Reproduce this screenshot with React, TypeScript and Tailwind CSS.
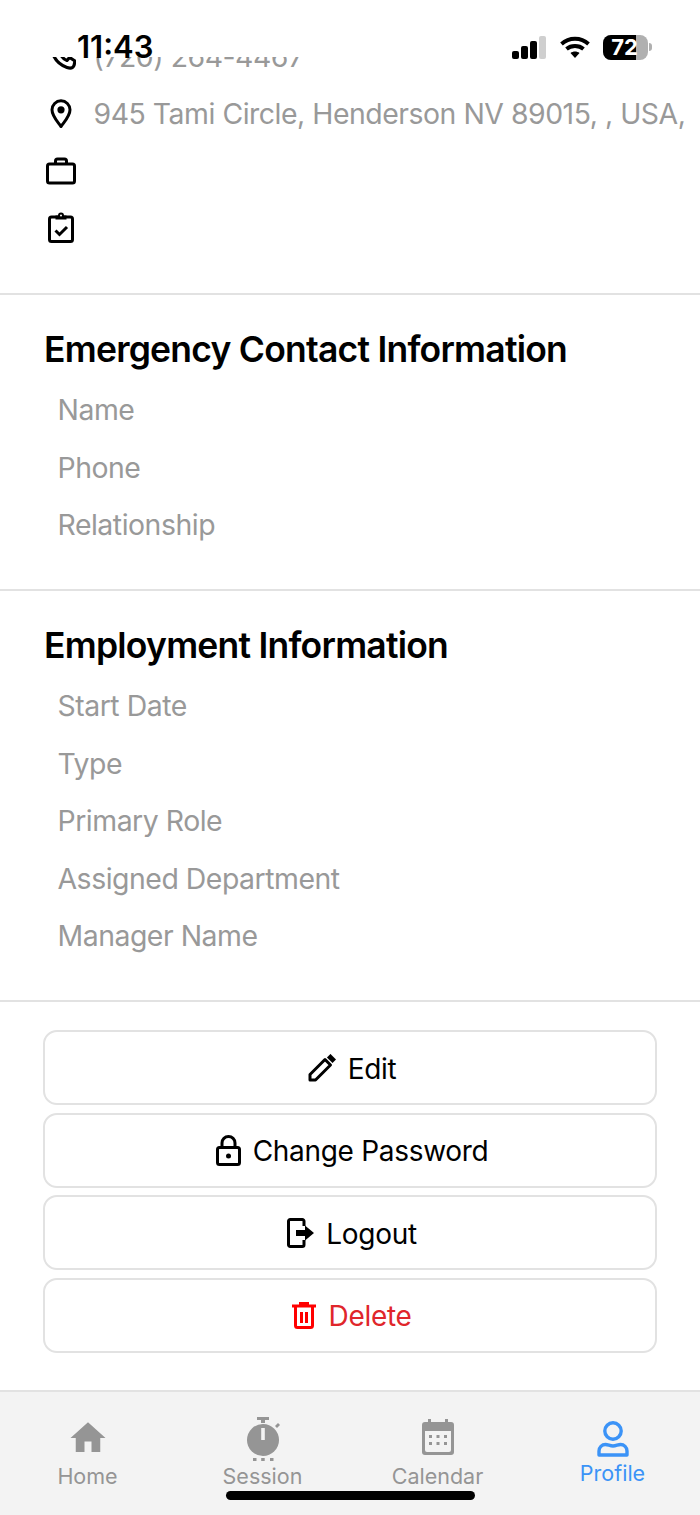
import React from 'react';
import { MdHome } from 'react-icons/md';

const MUTED = 'text-[#999999]';
const BODY = 'text-[28.4px] tracking-[-0.47px]';

const PhoneIcon = () => (
  <svg viewBox="0 0 26 28" className="-mt-[3px] ml-[3px] h-[28px] w-[26px]" fill="none" stroke="black" strokeWidth="3.2">
    <path d="M5 2 L9 1 L13 8 L10 11 C11.5 15 13 17 17 18.5 L19.5 15.5 L25 19 L24 23.5 C23 26 20 26.5 17 25.5 C10 23 4 17 2 9 C1.5 6 2.5 3 5 2 Z" strokeLinejoin="round" />
  </svg>
);

const PinIcon = () => (
  <svg viewBox="0 0 22 30" className="-mt-[1px] h-[30px] w-[22px]" fill="none" stroke="black" strokeWidth="3">
    <path d="M11 27.5 C7 22 2 17 2 10.8 A9 9 0 0 1 20 10.8 C20 17 15 22 11 27.5 Z" strokeLinejoin="round" />
    <circle cx="11" cy="10.8" r="3.6" fill="black" stroke="none" />
  </svg>
);

const BriefcaseIcon = () => (
  <svg viewBox="0 0 30 28" className="-mt-[1px] h-[28px] w-[30px]" fill="none" stroke="black" strokeWidth="3">
    <rect x="1.5" y="7" width="27" height="19" rx="2" />
    <path d="M9.5 6.5 V4 a2 2 0 0 1 2 -2 h7 a2 2 0 0 1 2 2 V6.5" />
  </svg>
);

const ClipboardIcon = () => (
  <svg viewBox="0 0 26 31" className="-mt-[4px] h-[31px] w-[26px]" fill="none" stroke="black" strokeWidth="3">
    <rect x="1.5" y="5" width="23" height="24.5" rx="2" />
    <rect x="7.5" y="3.5" width="11" height="4" fill="black" stroke="none" />
    <circle cx="13" cy="3.5" r="2" fill="white" strokeWidth="2" />
    <path d="M7.5 18.5 l4 4 l7.5 -7.5" strokeWidth="3" />
  </svg>
);

const PencilIcon = () => (
  <svg viewBox="0 0 28 28" className="h-[28px] w-[28px]" fill="none" stroke="black" strokeWidth="3">
    <path d="M2 26 V20.5 L17 5.5 L22.5 11 L7.5 26 Z" strokeLinejoin="round" />
    <path d="M20.7 1.7 L26.3 7.3" strokeWidth="5" />
  </svg>
);

const LockIcon = () => (
  <svg viewBox="0 0 25 31" className="h-[31px] w-[25px]" fill="none" stroke="black" strokeWidth="3">
    <rect x="1.5" y="12.5" width="22" height="17" rx="2" />
    <path d="M6 12 V8 a6.5 6.5 0 0 1 13 0 V12" />
    <circle cx="12.5" cy="21" r="2.5" fill="black" stroke="none" />
  </svg>
);

const LogoutIcon = () => (
  <svg viewBox="0 0 27 30" className="h-[30px] w-[27px]" fill="none" stroke="black" strokeWidth="3">
    <path d="M17 8 V3.2 a1.7 1.7 0 0 0 -1.7 -1.7 H3.2 A1.7 1.7 0 0 0 1.5 3.2 V26.8 a1.7 1.7 0 0 0 1.7 1.7 H15.3 A1.7 1.7 0 0 0 17 26.8 V22" />
    <path d="M9 12 H18 V7.5 L27 15 L18 22.5 V18 H9 Z" fill="black" stroke="none" />
  </svg>
);

const TrashIcon = () => (
  <svg viewBox="0 0 24 27" className="h-[27px] w-[24px]" fill="none" stroke="#ff0000" strokeWidth="3">
    <rect x="0" y="2.5" width="24" height="3" fill="#ff0000" stroke="none" />
    <rect x="7" y="0" width="10" height="3" fill="#ff0000" stroke="none" />
    <path d="M3.5 5 V23.5 a2 2 0 0 0 2 2 H18.5 a2 2 0 0 0 2 -2 V5" />
    <path d="M9.5 10 V21 M14.5 10 V21" />
  </svg>
);

const SessionIcon = () => (
  <svg viewBox="0 0 36 46" className="mt-[1px] h-[46px] w-[36px]" fill="#959595">
    <rect x="12" y="0" width="12" height="3" />
    <rect x="16" y="2" width="4" height="4" />
    <path d="M30 9 L33 6 L35 8 L32 11 Z" />
    <circle cx="18" cy="23" r="16" />
    <rect x="16.2" y="11" width="3.6" height="12" fill="#f3f3f3" />
    <rect x="8" y="41" width="3.5" height="3" />
    <rect x="16.2" y="41" width="3.5" height="3" />
    <rect x="25" y="41" width="3.5" height="3" />
  </svg>
);

const CalendarIcon = () => (
  <svg viewBox="0 0 32 36" className="mt-[3px] h-[36px] w-[32px]">
    <path
      fillRule="evenodd"
      fill="#959595"
      d="M6 0 h3 v3 h14 v-3 h3 v3 h3 a3 3 0 0 1 3 3 v27 a3 3 0 0 1 -3 3 h-26 a3 3 0 0 1 -3 -3 v-27 a3 3 0 0 1 3 -3 h3 z M3 12 v19 a2 2 0 0 0 2 2 h22 a2 2 0 0 0 2 -2 v-19 z"
    />
    <g fill="#959595">
      <rect x="7" y="16" width="3" height="3" />
      <rect x="14.5" y="16" width="3" height="3" />
      <rect x="22" y="16" width="3" height="3" />
      <rect x="7" y="23" width="3" height="3" />
      <rect x="14.5" y="23" width="3" height="3" />
      <rect x="22" y="23" width="3" height="3" />
    </g>
  </svg>
);

const ProfileIcon = () => (
  <svg viewBox="0 0 32 36" className="mt-[5px] h-[36px] w-[32px]" fill="none" stroke="#3b93f7" strokeWidth="3.4">
    <circle cx="16" cy="10" r="8.2" />
    <path d="M2 34 V30 a6.5 6.5 0 0 1 6.5 -6.5 C11 23.5 13 25 16 25 C19 25 21 23.5 23.5 23.5 A6.5 6.5 0 0 1 30 30 V34 Z" strokeLinejoin="round" />
  </svg>
);

const StatusBar = () => (
  <div className="relative z-10 flex h-[57px] shrink-0 bg-white">
    <span className="ml-[77px] mt-[28px] h-[38px] text-[31px] font-semibold leading-[38px] text-black">11:43</span>
    <div className="ml-auto mr-[48px] mt-[34px] flex h-[26px] items-center">
      <svg viewBox="0 0 34 23" className="h-[23px] w-[34px]">
        <rect x="0" y="15" width="7" height="8" rx="2" fill="black" />
        <rect x="9" y="10" width="7" height="13" rx="2" fill="black" />
        <rect x="18" y="5" width="7" height="18" rx="2" fill="black" />
        <rect x="27" y="0" width="7" height="23" rx="2" fill="#cfcfcf" />
      </svg>
      <svg viewBox="0 0 30 24" className="ml-[14px] h-[24px] w-[30px]" fill="none" stroke="black" strokeWidth="3.8">
        <path d="M1.5 9 C9 2 21 2 28.5 9" />
        <path d="M6.5 14 C11 10 19 10 23.5 14" />
        <path d="M15 23 L10.5 18 C13 16 17 16 19.5 18 Z" fill="black" stroke="none" />
      </svg>
      <div className="relative ml-[13px] flex h-[25px] w-[45px] overflow-hidden rounded-[8px] bg-[#b0b0b0]">
        <div className="h-full w-[33px] bg-black" />
        <span className="absolute inset-0 pr-[2px] text-center text-[22px] font-bold leading-[25px] text-white">72</span>
      </div>
      <div className="ml-[1px] h-[8px] w-[3px] rounded-r-full bg-[#b0b0b0]" />
    </div>
  </div>
);

const IconRow = ({ icon, text }: { icon: React.ReactNode; text?: string }) => (
  <div className="flex h-[57.4px] items-center whitespace-nowrap pl-[46px]">
    <div className="flex w-[30px] shrink-0 justify-center">{icon}</div>
    {text && <span className={`ml-[17.5px] ${BODY} ${MUTED}`}>{text}</span>}
  </div>
);

const Section = ({ title, fields }: { title: string; fields: string[] }) => (
  <div className="border-b-2 border-[#e2e2e2] pb-[35px] pl-[44px] pt-[33px]">
    <h2 className="mb-[10px] text-[35.5px] font-semibold leading-[44px] tracking-[-0.77px] text-black">{title}</h2>
    {fields.map((field) => (
      <div key={field} className={`flex h-[57.4px] items-center pl-[13.5px] ${BODY} ${MUTED}`}>
        {field}
      </div>
    ))}
  </div>
);

const ActionButton = ({ icon, label, danger }: { icon: React.ReactNode; label: string; danger?: boolean }) => (
  <button className="flex h-[75px] w-full items-center justify-center gap-[12px] rounded-[14px] border-2 border-[#e2e2e2] bg-white pl-[4px]">
    {icon}
    <span className={`pt-[2px] text-[28px] tracking-[-0.3px] ${danger ? 'text-[#e0262b]' : 'text-black'}`}>{label}</span>
  </button>
);

const Tab = ({ icon, label, active }: { icon: React.ReactNode; label: string; active?: boolean }) => (
  <div className="flex flex-col items-center">
    <div className="flex h-[46px] items-start justify-center">{icon}</div>
    <span className={`text-[21.5px] leading-[26px] ${active ? '-mt-[2px] text-[#3b93f7]' : 'mt-[1px] text-[#959595]'}`}>{label}</span>
  </div>
);

export default function App() {
  return (
    <div className="relative flex h-[1515px] w-[700px] flex-col overflow-hidden bg-white font-['Inter',sans-serif]">
      <StatusBar />
      <div className="min-h-0 flex-1 overflow-hidden">
        <div className="-mt-[28.7px]">
          <div className="border-b-2 border-[#e2e2e2] pb-[35px]">
            <IconRow icon={<PhoneIcon />} text="(720) 264-4467" />
            <IconRow icon={<PinIcon />} text="945 Tami Circle, Henderson NV 89015, , USA," />
            <IconRow icon={<BriefcaseIcon />} />
            <IconRow icon={<ClipboardIcon />} />
          </div>
          <Section title="Emergency Contact Information" fields={['Name', 'Phone', 'Relationship']} />
          <Section
            title="Employment Information"
            fields={['Start Date', 'Type', 'Primary Role', 'Assigned Department', 'Manager Name']}
          />
          <div className="flex flex-col gap-[7.5px] px-[43px] pt-[28px]">
            <ActionButton icon={<PencilIcon />} label="Edit" />
            <ActionButton icon={<LockIcon />} label="Change Password" />
            <ActionButton icon={<LogoutIcon />} label="Logout" />
            <ActionButton icon={<TrashIcon />} label="Delete" danger />
          </div>
        </div>
      </div>
      <div className="grid h-[125px] shrink-0 grid-cols-4 border-t-2 border-[#e2e2e2] bg-[#f3f3f3] pt-[24px]">
        <Tab icon={<MdHome size={42} color="#959595" className="mt-[1px]" />} label="Home" />
        <Tab icon={<SessionIcon />} label="Session" />
        <Tab icon={<CalendarIcon />} label="Calendar" />
        <Tab icon={<ProfileIcon />} label="Profile" active />
      </div>
      <div className="absolute bottom-[15px] left-[226px] h-[9px] w-[249px] rounded-full bg-black" />
    </div>
  );
}
